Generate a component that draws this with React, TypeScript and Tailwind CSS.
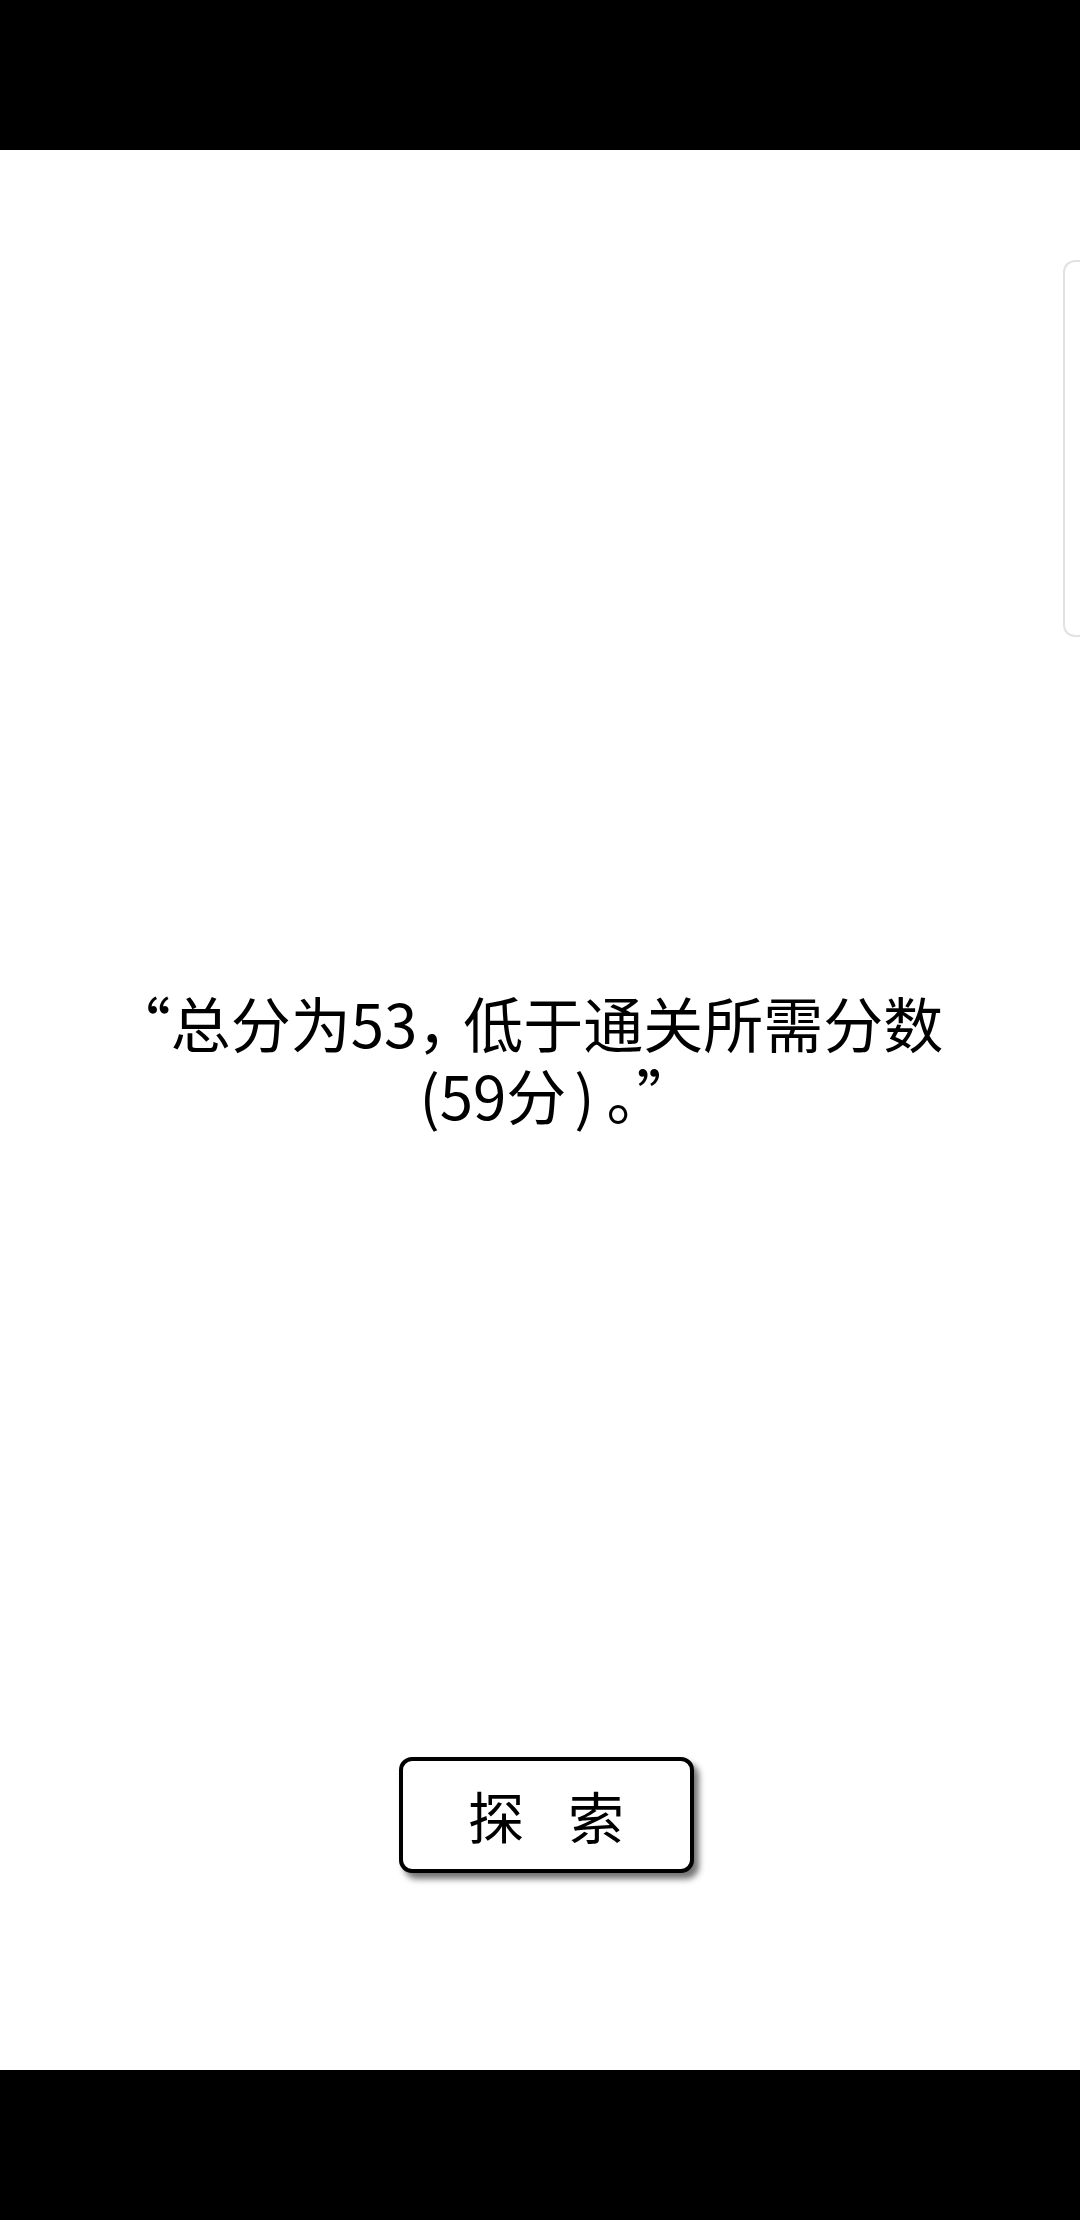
import React from 'react';

const FONT = { fontFamily: '"Noto Sans CJK SC", "Noto Sans", sans-serif' };

export default function App() {
  return (
    <div className="relative flex h-[2220px] w-[1080px] flex-col overflow-hidden bg-black" style={FONT}>
      {/* status bar */}
      <div className="h-[150px] shrink-0 bg-black" />

      {/* page */}
      <div className="relative flex h-[1920px] shrink-0 flex-col items-center bg-white">
        <div className="mr-[26px] mt-[836px] flex flex-col items-center text-[60px] leading-[72px] text-black">
          <p className="whitespace-nowrap">
            “总分为53<span className="tracking-[-14px]">，</span>低于通关所需分数
          </p>
          <p className="ml-[62px] whitespace-nowrap">
            (59分<span className="pl-[8px] pr-[12px]">)</span>。”
          </p>
        </div>

        <button
          type="button"
          className="ml-[12px] mt-[627px] flex h-[116px] w-[295px] items-center justify-center gap-[44px] rounded-[13px] border-[4px] border-black bg-white text-[56px] leading-none text-black shadow-[5px_6px_6px_rgba(0,0,0,0.55)]"
        >
          <span>探</span>
          <span>索</span>
        </button>

        {/* edge panel handle */}
        <div className="absolute left-[1063px] top-[110px] h-[377px] w-[30px] rounded-l-[12px] border-[2px] border-r-0 border-[#e2e2e2] bg-white" />
      </div>

      {/* nav bar */}
      <div className="h-[150px] shrink-0 bg-black" />
    </div>
  );
}
